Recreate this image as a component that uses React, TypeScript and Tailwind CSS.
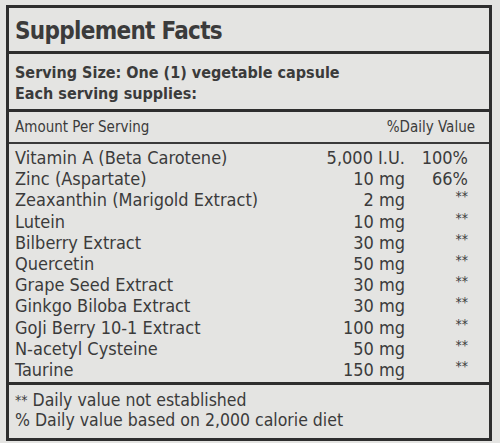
const rows = [
  { name: "Vitamin A (Beta Carotene)", amount: "5,000 I.U.", dv: "100%" },
  { name: "Zinc (Aspartate)", amount: "10 mg", dv: "66%" },
  { name: "Zeaxanthin (Marigold Extract)", amount: "2 mg", dv: "**" },
  { name: "Lutein", amount: "10 mg", dv: "**" },
  { name: "Bilberry Extract", amount: "30 mg", dv: "**" },
  { name: "Quercetin", amount: "50 mg", dv: "**" },
  { name: "Grape Seed Extract", amount: "30 mg", dv: "**" },
  { name: "Ginkgo Biloba Extract", amount: "30 mg", dv: "**" },
  { name: "GoJi Berry 10-1 Extract", amount: "100 mg", dv: "**" },
  { name: "N-acetyl Cysteine", amount: "50 mg", dv: "**" },
  { name: "Taurine", amount: "150 mg", dv: "**" },
];

export default function App() {
  return (
    <div
      className="w-[500px] h-[443px] bg-[#e4e4e2] pt-[5px] pl-[6px] pr-[8px] text-[#3b3b3b]"
      style={{ fontFamily: '"DejaVu Sans Condensed", "Liberation Sans", sans-serif' }}
    >
      <div className="border-[3px] border-[#2e2e2e] h-[436px] flex flex-col">
        {/* Title */}
        <div className="h-[46px] shrink-0 border-b-[3px] border-[#2e2e2e] px-[6px] pt-[2px] flex items-center">
          <h1 className="text-[24px] font-bold leading-none tracking-[-0.7px]">Supplement Facts</h1>
        </div>

        {/* Serving */}
        <div className="h-[58px] shrink-0 border-b-[3px] border-[#2e2e2e] px-[6px] pt-[8px] text-[16px] font-bold leading-[21px]">
          <p>Serving Size: One (1) vegetable capsule</p>
          <p>Each serving supplies:</p>
        </div>

        {/* Header */}
        <div className="h-[32px] shrink-0 border-b-2 border-[#3a3a3a] px-[6px] pr-[14px] flex items-center justify-between text-[15px]">
          <span>Amount Per Serving</span>
          <span>%Daily Value</span>
        </div>

        {/* Rows */}
        <div className="flex-1 border-b-[3px] border-[#2e2e2e] pl-[6px] pr-[21px] pt-[3px] text-[18px] leading-[21.2px]">
          {rows.map((r) => (
            <div key={r.name} className="flex items-center">
              <span className="flex-1">{r.name}</span>
              <span className="w-[120px] text-right">{r.amount}</span>
              <span
                className={
                  r.dv === "**"
                    ? "w-[63px] text-right text-[14px] -translate-y-[3px]"
                    : "w-[63px] text-right"
                }
              >
                {r.dv}
              </span>
            </div>
          ))}
        </div>

        {/* Footer */}
        <div className="h-[53px] shrink-0 px-[6px] pt-[5px] text-[17.5px] leading-[20px]">
          <p>
            <span className="text-[14px] align-top">**</span> Daily value not established
          </p>
          <p>% Daily value based on 2,000 calorie diet</p>
        </div>
      </div>
    </div>
  );
}
